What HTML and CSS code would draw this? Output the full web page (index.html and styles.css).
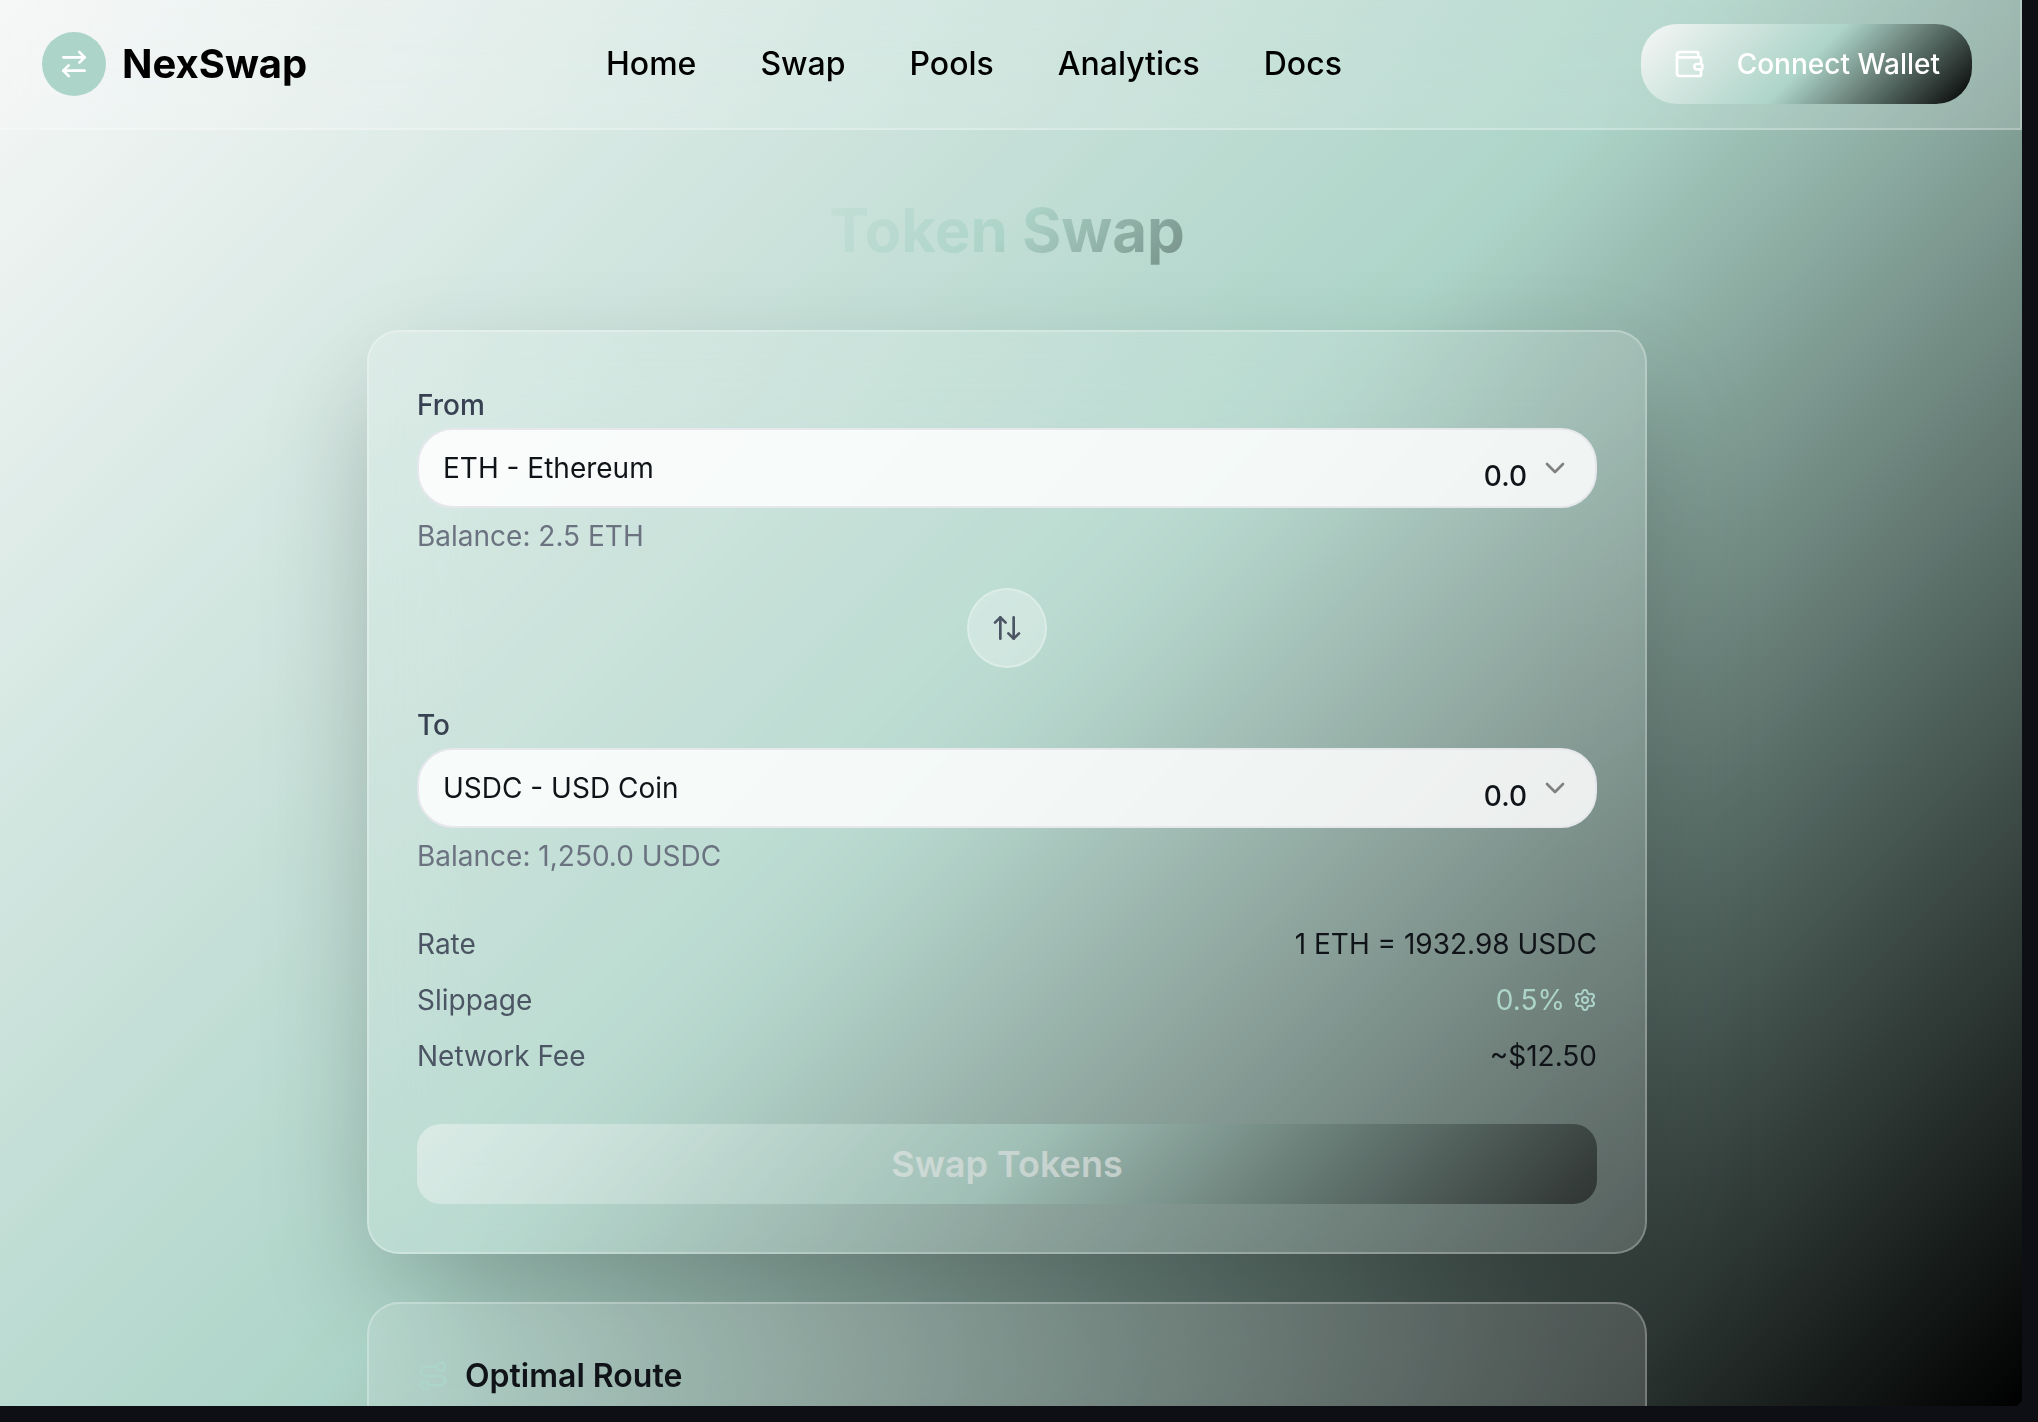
FILE: index.html
```html
<!DOCTYPE html>
<html lang="en">
<head>
<meta charset="utf-8">
<title>NexSwap</title>
<link rel="stylesheet" href="styles.css">
</head>
<body>
<div class="app">
  <header class="header">
    <a class="brand" href="#">
      <span class="brand-mark"><svg class="icon" viewBox="0 0 24 24"><path d="m16 3 4 4-4 4"/><path d="M20 7H4"/><path d="m8 21-4-4 4-4"/><path d="M4 17h16"/></svg></span>
      NexSwap
    </a>
    <nav class="nav">
      <a href="#">Home</a>
      <a href="#">Swap</a>
      <a href="#">Pools</a>
      <a href="#">Analytics</a>
      <a href="#">Docs</a>
    </nav>
    <button class="connect" type="button">
      <svg class="icon" viewBox="0 0 24 24"><path d="M19 7V4a1 1 0 0 0-1-1H5a2 2 0 0 0 0 4h15a1 1 0 0 1 1 1v4h-3a2 2 0 0 0 0 4h3a1 1 0 0 0 1-1v-2a1 1 0 0 0-1-1"/><path d="M3 5v14a2 2 0 0 0 2 2h15a1 1 0 0 0 1-1v-4"/></svg>
      Connect Wallet
    </button>
  </header>

  <main class="main">
    <h1 class="title">Token Swap</h1>

    <section class="card card-swap">
      <div class="group">
        <label class="label" for="from-token">From</label>
        <div class="field">
          <select class="select" id="from-token"><option>ETH - Ethereum</option></select>
          <svg class="icon chevron" viewBox="0 0 24 24"><path d="m6 9 6 6 6-6"/></svg>
          <input class="amount" type="text" value="0.0" aria-label="From amount">
        </div>
        <p class="balance">Balance: 2.5 ETH</p>
      </div>

      <button class="flip" type="button" aria-label="Switch tokens"><svg class="icon" viewBox="0 0 24 24"><path d="m21 16-4 4-4-4"/><path d="M17 20V4"/><path d="m3 8 4-4 4 4"/><path d="M7 4v16"/></svg></button>

      <div class="group">
        <label class="label" for="to-token">To</label>
        <div class="field">
          <select class="select" id="to-token"><option>USDC - USD Coin</option></select>
          <svg class="icon chevron" viewBox="0 0 24 24"><path d="m6 9 6 6 6-6"/></svg>
          <input class="amount" type="text" value="0.0" aria-label="To amount">
        </div>
        <p class="balance">Balance: 1,250.0 USDC</p>
      </div>

      <dl class="details">
        <div class="row"><dt>Rate</dt><dd>1 ETH = 1932.98 USDC</dd></div>
        <div class="row"><dt>Slippage</dt><dd><button class="slippage" type="button">0.5% <svg class="icon icon-small" viewBox="0 0 24 24"><path d="M9.671 4.136a2.34 2.34 0 0 1 4.659 0 2.34 2.34 0 0 0 3.319 1.915 2.34 2.34 0 0 1 2.33 4.033 2.34 2.34 0 0 0 0 3.831 2.34 2.34 0 0 1-2.33 4.033 2.34 2.34 0 0 0-3.319 1.915 2.34 2.34 0 0 1-4.659 0 2.34 2.34 0 0 0-3.32-1.915 2.34 2.34 0 0 1-2.33-4.033 2.34 2.34 0 0 0 0-3.831A2.34 2.34 0 0 1 6.35 6.051a2.34 2.34 0 0 0 3.319-1.915"/><circle cx="12" cy="12" r="3"/></svg></button></dd></div>
        <div class="row"><dt>Network Fee</dt><dd>~$12.50</dd></div>
      </dl>

      <button class="submit" type="button" disabled>Swap Tokens</button>
    </section>

    <section class="card">
      <h2 class="card-title"><svg class="icon icon-route" viewBox="0 0 24 24"><circle cx="6" cy="19" r="3"/><path d="M9 19h8.5a3.5 3.5 0 0 0 0-7h-11a3.5 3.5 0 0 1 0-7H15"/><circle cx="18" cy="5" r="3"/></svg>Optimal Route</h2>
    </section>
  </main>
</div>
</body>
</html>
```
FILE: styles.css
```css
:root {
  --mint: #add4c8;
  --fade: linear-gradient(135deg, #f6f7f7 0%, var(--mint) 50%, #000 100%);
  --glass: rgba(255, 255, 255, 0.15);
  --glass-edge: rgba(255, 255, 255, 0.25);
}

* { box-sizing: border-box; margin: 0; padding: 0; }

html { height: 100%; overflow: hidden; }

body {
  height: 100%;
  padding: 0 16px 16px 0;
  overflow: hidden;
  background: #0e0f14;
  color: #101418;
  font: 400 28px/40px Inter, sans-serif;
}

button, input, select { font: inherit; color: inherit; border: 0; }

.app {
  height: 100%;
  overflow: hidden;
  border-radius: 0 0 8px 0;
  background: var(--fade);
}

.icon {
  display: block;
  flex: none;
  width: 32px;
  height: 32px;
  fill: none;
  stroke: currentColor;
  stroke-width: 2;
  stroke-linecap: round;
  stroke-linejoin: round;
}

.icon-small { width: 24px; height: 24px; }
.icon-route { color: var(--mint); }

.header {
  display: flex;
  align-items: center;
  justify-content: space-between;
  padding: 24px 48px 24px 42px;
  border: solid var(--glass-edge);
  border-width: 0 2px 2px 0;
  background: var(--glass);
  backdrop-filter: blur(40px);
}

.brand {
  display: flex;
  align-items: center;
  gap: 16px;
  color: #000;
  font-size: 40px;
  font-weight: 700;
  line-height: 56px;
  text-decoration: none;
}

.brand-mark {
  display: grid;
  place-items: center;
  width: 64px;
  height: 64px;
  border-radius: 50%;
  background: var(--mint);
  color: #fff;
}

.nav { display: flex; gap: 64px; }

.nav a {
  color: #000;
  font-size: 32px;
  font-weight: 500;
  line-height: 48px;
  text-decoration: none;
}

.connect {
  display: flex;
  align-items: center;
  gap: 32px;
  height: 80px;
  padding: 0 32px;
  border-radius: 36px;
  background: var(--fade);
  color: #fff;
  font-weight: 500;
}

.main {
  display: flex;
  flex-direction: column;
  gap: 48px;
  max-width: 1288px;
  margin: 0 auto;
  padding: 64px 8px 0 0;
}

.title {
  background: var(--fade);
  background-clip: text;
  color: transparent;
  font-size: 60px;
  font-weight: 700;
  line-height: 72px;
  margin-bottom: 16px;
  text-align: center;
}

.card {
  padding: 48px;
  border: 2px solid var(--glass-edge);
  border-radius: 32px;
  background: var(--glass);
  backdrop-filter: blur(40px);
  min-height: 240px;
}

.card-swap {
  display: flex;
  flex-direction: column;
  box-shadow: 0 48px 120px -20px rgba(0, 0, 0, 0.28);
}

.label {
  display: block;
  padding-top: 2px;
  color: #374151;
  font-weight: 500;
  line-height: 46px;
}

.field { position: relative; color: #101418; }

.select {
  display: block;
  width: 100%;
  height: 80px;
  padding: 0 24px;
  border: 2px solid #e5e7eb;
  border-radius: 36px;
  background: rgba(255, 255, 255, 0.85);
  appearance: none;
}

.chevron {
  position: absolute;
  top: 24px;
  right: 26px;
  color: #808080;
}

.amount {
  position: absolute;
  top: 20px;
  right: 70px;
  width: 256px;
  height: 56px;
  background: none;
  font-weight: 500;
  text-align: right;
}

.balance { margin-top: 8px; color: #6b7280; }

.flip {
  display: grid;
  place-items: center;
  align-self: center;
  width: 80px;
  height: 80px;
  margin: 32px 0;
  border: 2px solid var(--glass-edge);
  border-radius: 50%;
  background: rgba(255, 255, 255, 0.3);
  color: #4b5563;
}

.details {
  display: flex;
  flex-direction: column;
  gap: 16px;
  margin: 48px 0;
}

.row { display: flex; justify-content: space-between; }
.row dt { color: #4b5563; }

.slippage {
  display: flex;
  align-items: center;
  gap: 8px;
  background: none;
  color: var(--mint);
}

.submit {
  height: 80px;
  border-radius: 24px;
  background: var(--fade);
  color: #fff;
  font-size: 36px;
  font-weight: 600;
  opacity: 0.5;
}

.card-title {
  display: flex;
  align-items: center;
  gap: 16px;
  font-size: 32px;
  font-weight: 600;
  line-height: 48px;
}
```
